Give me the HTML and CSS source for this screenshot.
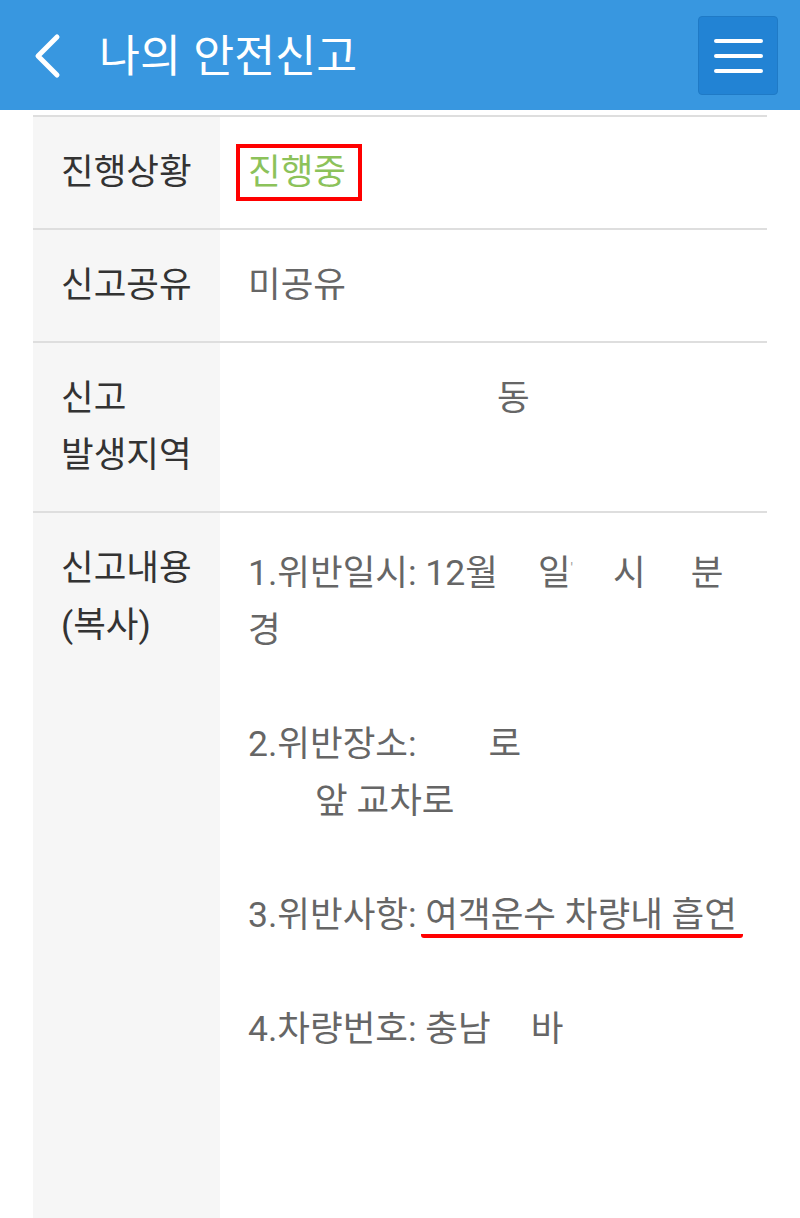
FILE: index.html
```html
<!DOCTYPE html>
<html lang="ko">
<head>
<meta charset="utf-8">
<title>나의 안전신고</title>
<link rel="stylesheet" href="styles.css">
</head>
<body>
<header class="topbar">
  <div class="title-wrap">
    <svg class="back" width="30" height="46" viewBox="0 0 30 46"><polyline points="25,4 6,23 25,42" fill="none" stroke="#fff" stroke-width="5" stroke-linecap="round" stroke-linejoin="round"/></svg>
    <h1 class="title">나의 안전신고</h1>
  </div>
  <button class="menu" aria-label="메뉴">
    <span class="bar"></span><span class="bar"></span><span class="bar"></span>
  </button>
</header>
<main class="table">
  <div class="row">
    <div class="label">진행상황</div>
    <div class="value"><span class="status">진행중</span></div>
  </div>
  <div class="row">
    <div class="label">신고공유</div>
    <div class="value">미공유</div>
  </div>
  <div class="row">
    <div class="label">신고<br>발생지역</div>
    <div class="value"><span class="sp-dong">동</span></div>
  </div>
  <div class="row last">
    <div class="label">신고내용<br>(복사)</div>
    <div class="value">
      <p class="item">1.위반일시: 12월<span class="sp-il">일</span><span class="tick">'</span><span class="sp-si">시</span><span class="sp-bun">분</span><br>경</p>
      <p class="item">2.위반장소:<span class="sp-ro">로</span><br><span class="sp-ap">앞 교차로</span></p>
      <p class="item">3.위반사항: <span class="mark">여객운수 차량내 흡연</span></p>
      <p class="item">4.차량번호: 충남<span class="sp-ba">바</span></p>
    </div>
  </div>
</main>
</body>
</html>
```
FILE: styles.css
```css
html, body {
  margin: 0;
  padding: 0;
  background: #ffffff;
}
body {
  font-family: Roboto, "Noto Sans CJK KR", sans-serif;
  width: 800px;
  height: 1218px;
  overflow: hidden;
}
.topbar {
  height: 110px;
  background: #3897e0;
  display: flex;
  align-items: center;
  justify-content: space-between;
  padding: 0 22px 0 32px;
  box-sizing: border-box;
}
.title-wrap {
  display: flex;
  align-items: center;
  gap: 37px;
}
.back {
  display: block;
  margin-top: 2px;
}
.title {
  margin: 0;
  color: #ffffff;
  font-weight: 400;
  font-size: 44.5px;
  line-height: 1;
  font-family: "Noto Sans CJK KR", sans-serif;
  margin-top: -4px;
}
.menu {
  width: 80px;
  height: 79px;
  background: #2283d4;
  border: 1px solid #1f7ac6;
  border-radius: 4px;
  display: flex;
  flex-direction: column;
  align-items: center;
  justify-content: center;
  gap: 11px;
  padding: 0;
  margin-top: 1px;
}
.bar {
  display: block;
  width: 49px;
  height: 4px;
  border-radius: 2px;
  background: #ffffff;
}
.table {
  margin: 5px 33px 0;
  border-top: 2px solid #dedede;
}
.row {
  display: grid;
  grid-template-columns: 187px 1fr;
  border-bottom: 2px solid #dedede;
}
.row.last {
  border-bottom: none;
  min-height: 720px;
}
.label {
  background: #f6f6f6;
  color: #333333;
  font-size: 35.5px;
  line-height: 57px;
  padding: 27px 0 27px 28px;
}
.value {
  color: #666666;
  font-size: 35.5px;
  line-height: 57px;
  padding: 27px 0 27px 28px;
}
.status {
  display: inline-block;
  color: #8cc25a;
  border: 4px solid #ff0000;
  line-height: 49px;
  padding: 0 12px 0 8px;
  margin-left: -12px;
}
.item {
  margin: 0 0 57px;
}
.sp-dong { margin-left: 249px; }
.sp-il { margin-left: 40px; }
.tick { font-size: 14px; vertical-align: 12px; color: #999; }
.sp-si { margin-left: 40px; }
.sp-bun { margin-left: 45px; }
.sp-ro { margin-left: 72px; }
.sp-ap { margin-left: 67px; }
.sp-ba { margin-left: 40px; }
.mark {
  display: inline-block;
  line-height: 38px;
  border-bottom: 4px solid #ff0000;
  border-radius: 0 0 3px 3px;
  padding: 0 6px 0 4px;
  margin-left: -4px;
}
```
